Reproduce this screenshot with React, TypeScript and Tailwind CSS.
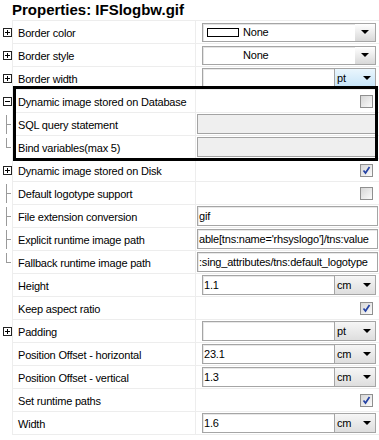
import type { ReactNode } from 'react';

type Tree = 'plus' | 'minus' | 'tee' | 'end' | undefined;

type Value =
  | { t: 'combo'; text: string; swatch?: boolean }
  | { t: 'unit'; value: string; unit: string; hot?: boolean }
  | { t: 'check'; on: boolean }
  | { t: 'disabled' }
  | { t: 'text'; value: string };

type Row = { label: string; tree?: Tree; value: Value };

const top: Row[] = [
  { label: 'Border color', tree: 'plus', value: { t: 'combo', text: 'None', swatch: true } },
  { label: 'Border style', tree: 'plus', value: { t: 'combo', text: 'None' } },
  { label: 'Border width', tree: 'plus', value: { t: 'unit', value: '', unit: 'pt', hot: true } },
];

const boxed: Row[] = [
  { label: 'Dynamic image stored on Database', tree: 'minus', value: { t: 'check', on: false } },
  { label: 'SQL query statement', tree: 'tee', value: { t: 'disabled' } },
  { label: 'Bind variables(max 5)', tree: 'end', value: { t: 'disabled' } },
];

const rest: Row[] = [
  { label: 'Dynamic image stored on Disk', tree: 'plus', value: { t: 'check', on: true } },
  { label: 'Default logotype support', tree: 'tee', value: { t: 'check', on: false } },
  { label: 'File extension conversion', tree: 'tee', value: { t: 'text', value: 'gif' } },
  { label: 'Explicit runtime image path', tree: 'tee', value: { t: 'text', value: "able[tns:name='rhsyslogo']/tns:value" } },
  { label: 'Fallback runtime image path', tree: 'end', value: { t: 'text', value: ':sing_attributes/tns:default_logotype' } },
  { label: 'Height', value: { t: 'unit', value: '1.1', unit: 'cm' } },
  { label: 'Keep aspect ratio', value: { t: 'check', on: true } },
  { label: 'Padding', tree: 'plus', value: { t: 'unit', value: '', unit: 'pt' } },
  { label: 'Position Offset - horizontal', value: { t: 'unit', value: '23.1', unit: 'cm' } },
  { label: 'Position Offset - vertical', value: { t: 'unit', value: '1.3', unit: 'cm' } },
  { label: 'Set runtime paths', value: { t: 'check', on: true } },
  { label: 'Width', value: { t: 'unit', value: '1.6', unit: 'cm' } },
];

function TreeIcon({ kind }: { kind: Tree }) {
  if (!kind) return null;
  return (
    <svg width="12" height="23" viewBox="0 0 12 23" className="block">
      {(kind === 'plus' || kind === 'minus') && (
        <g shapeRendering="crispEdges">
          <rect x="3.5" y="7.5" width="8" height="8" fill="#fff" stroke="#222" />
          <line x1="5" y1="11.5" x2="10" y2="11.5" stroke="#000" />
          {kind === 'plus' && <line x1="7.5" y1="9" x2="7.5" y2="14" stroke="#000" />}
        </g>
      )}
      {kind === 'tee' && (
        <g stroke="#9a9a9a" shapeRendering="crispEdges">
          <line x1="6.5" y1="2" x2="6.5" y2="21" />
          <line x1="6.5" y1="11.5" x2="11" y2="11.5" />
        </g>
      )}
      {kind === 'end' && (
        <g stroke="#9a9a9a" shapeRendering="crispEdges">
          <line x1="6.5" y1="2" x2="6.5" y2="12" />
          <line x1="6.5" y1="11.5" x2="11" y2="11.5" />
        </g>
      )}
    </svg>
  );
}

function Arrow() {
  return (
    <svg width="8" height="4" viewBox="0 0 8 4" className="block">
      <polygon points="0,0 8,0 4,4" fill="#000" />
    </svg>
  );
}

function Check({ on }: { on: boolean }) {
  return (
    <span className="flex h-[13px] w-[13px] items-center justify-center border border-[#8f8f8f] bg-linear-to-br from-[#d6d6d6] to-[#fbfbfb]">
      {on && (
        <svg width="9" height="9" viewBox="0 0 9 9">
          <path d="M1.5 4.5 L3.5 7 L7.5 1" fill="none" stroke="#2442a4" strokeWidth="1.7" />
        </svg>
      )}
    </span>
  );
}

function ValueCell({ v }: { v: Value }) {
  switch (v.t) {
    case 'combo':
      return (
        <div className="ml-[6px] flex h-[19px] w-[174px] items-center border border-[#a5a5a5] bg-white shadow-[inset_1px_1px_0_#e4e4e4]">
          <span className={`ml-[4px] h-[9px] w-[32px] ${v.swatch ? 'border border-black bg-white' : ''}`} />
          <span className="ml-[4px]">{v.text}</span>
          <span className="ml-auto flex h-full w-[20px] items-center justify-center bg-linear-to-b from-white to-[#d8d8d8]">
            <Arrow />
          </span>
        </div>
      );
    case 'unit':
      return (
        <div className="ml-[6px] flex h-[20px] w-[174px]">
          <span className="flex w-[133px] items-center border border-[#a5a5a5] bg-white pl-[1px] shadow-[inset_1px_1px_0_#e8e8e8]">{v.value}</span>
          <span
            className={`flex flex-1 items-center border border-l-0 border-[#a5a5a5] pl-[2px] pr-[4px] ${
              v.hot ? 'bg-linear-to-b from-[#eaf6fd] to-[#c6e4f8]' : 'bg-linear-to-b from-[#f6f6f6] to-[#dedede]'
            }`}
          >
            {v.unit}
            <span className="ml-auto">
              <Arrow />
            </span>
          </span>
        </div>
      );
    case 'check':
      return (
        <div className="flex flex-1 justify-end pr-[6px]">
          <Check on={v.on} />
        </div>
      );
    case 'disabled':
      return <div className="ml-[1px] h-[20px] w-[181px] border border-[#a3a3a3] bg-[#efefef]" />;
    case 'text':
      return (
        <div className="ml-[1px] flex h-[20px] w-[181px] items-center overflow-hidden whitespace-nowrap border border-[#a5a5a5] bg-white pl-[1px] shadow-[inset_1px_1px_0_#e8e8e8]">
          {v.value}
        </div>
      );
  }
}

function PropRow({ row }: { row: Row }) {
  return (
    <div className="flex h-[23px]">
      <div className="w-[12px] shrink-0">
        <TreeIcon kind={row.tree} />
      </div>
      <div className="flex w-[183px] shrink-0 items-center border-b border-l border-[#ededed] pl-[5px] pt-[3px]">
        {row.label}
      </div>
      <div className="flex flex-1 items-center border-b border-l border-[#ededed]">
        <ValueCell v={row.value} />
      </div>
    </div>
  );
}

function Rows({ rows }: { rows: Row[] }): ReactNode {
  return rows.map((r) => <PropRow key={r.label} row={r} />);
}

export default function App() {
  return (
    <main className="h-[440px] w-[379px] overflow-hidden bg-white font-['Liberation_Sans',Arial,sans-serif] text-[11px] tracking-[-0.2px] text-black">
      {/* Title */}
      <h1 className="flex h-[20px] items-center pl-[12px] text-[15px] font-bold tracking-normal">Properties: IFSlogbw.gif</h1>
      {/* Property grid */}
      <div className="ml-[12px] border-t border-[#ededed]" />
      <div className="flex flex-col">
        <Rows rows={top} />
        {/* Highlighted group */}
        <div className="relative">
          <Rows rows={boxed} />
          <div className="pointer-events-none absolute -top-[4px] -bottom-[2px] left-[13px] right-[1px] border-[3px] border-black" />
        </div>
        <Rows rows={rest} />
      </div>
    </main>
  );
}
